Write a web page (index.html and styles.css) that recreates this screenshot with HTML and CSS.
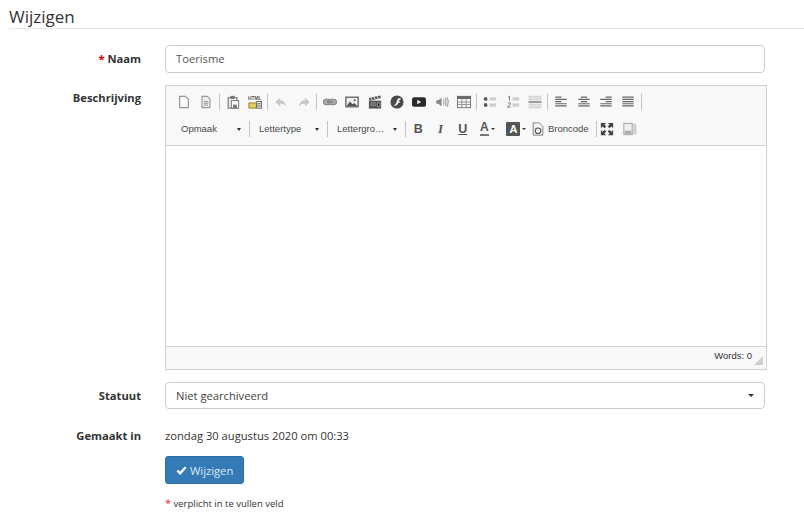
FILE: index.html
```html
<!DOCTYPE html>
<html>
<head>
  <title>Wijzigen</title>
  <link rel="stylesheet" href="styles.css">
</head>
<body>
  <svg class="defs" width="0" height="0">
    <symbol id="i-new" viewBox="0 0 16 16"><path d="M3 1.500h6.500l3.500 3.500v9.500h-10z" fill="#fbfbfb" stroke="#999" stroke-width="1.400"/></symbol>
    <symbol id="i-preview" viewBox="0 0 16 16"><path d="M3.500 1.500h6l3 3v10h-9z" fill="#eee" stroke="#999" stroke-width="1.300"/><path d="M5.500 7.500h5M5.500 9.500h5M5.500 11.500h5" stroke="#888"/></symbol>
    <symbol id="i-paste" viewBox="0 0 16 16"><path d="M2.500 3h10v12h-10z" fill="#eee" stroke="#888" stroke-width="1.500"/><rect x="5" y="1" width="5" height="3.500" fill="#777"/><rect x="6" y="6.500" width="8.500" height="8.500" fill="#fff" stroke="#666"/><rect x="8" y="11" width="4.500" height="4" fill="#777"/></symbol>
    <symbol id="i-undo" viewBox="0 0 16 16"><path d="M7 3l-5.500 5 5.500 5v-3c3 0 5 .8 6.500 3 0-4-2.500-7-6.500-7z" fill="#c8c8c8"/></symbol>
    <symbol id="i-redo" viewBox="0 0 16 16"><path d="M9 3l5.500 5-5.500 5v-3c-3 0-5 .8-6.500 3 0-4 2.500-7 6.500-7z" fill="#c8c8c8"/></symbol>
    <symbol id="i-link" viewBox="0 0 16 16"><rect x=".5" y="5" width="9" height="6" rx="3" fill="#aaa" stroke="#8c8c8c" stroke-width="1.300"/><rect x="6.500" y="5" width="9" height="6" rx="3" fill="#aaa" stroke="#8c8c8c" stroke-width="1.300"/><path d="M4.500 8h7" stroke="#777" stroke-width="1.500"/></symbol>
    <symbol id="i-image" viewBox="0 0 16 16"><rect x="1" y="2.500" width="14" height="11" fill="#f0f0f0" stroke="#555" stroke-width="1.400"/><path d="M2 12.500l3.500-5 3 3 2-1.500 3.500 3.500z" fill="#555"/><circle cx="11" cy="6" r="1.300" fill="#777"/></symbol>
    <symbol id="i-film" viewBox="0 0 16 16"><path d="M1 6.500h14v9h-14z" fill="#555"/><path d="M1 3.500l13-3 .8 3-13 3z" fill="#555"/><path d="M3.500 3l1 2.500M7 2.200l1 2.500M10.500 1.400l1 2.500" stroke="#ddd" stroke-width="1.200"/><path d="M3 9h6M3 11.500h6M11 9h2.500v4h-2.500z" stroke="#aaa"/></symbol>
    <symbol id="i-flash" viewBox="0 0 16 16"><circle cx="8" cy="8" r="7.500" fill="#4a4a4a"/><path d="M12 3.500c-3 .2-3.800 1.800-4.300 3.700s-1 3.800-3.700 5c3 .3 4.800-1 5.300-3.200l1.700-.2.300-1.800h-1.500c.3-1 .9-1.400 2.200-1.600z" fill="#f4f4f4"/></symbol>
    <symbol id="i-youtube" viewBox="0 0 16 16"><rect x="0" y="2.500" width="16" height="11" rx="2.500" fill="#2a2a2a"/><path d="M6 5.500l4.500 2.500-4.500 2.500z" fill="#f4f4f4"/></symbol>
    <symbol id="i-sound" viewBox="0 0 16 16"><path d="M1.500 6h2.500l3.500-3v10l-3.500-3h-2.500z" fill="#888"/><path d="M9.500 5c1 2 1 4 0 6M11.500 3.500c1.500 3 1.500 6 0 9M13.500 2.500c2 3.500 2 7.500 0 11" fill="none" stroke="#999" stroke-width="1.200"/></symbol>
    <symbol id="i-table" viewBox="0 0 16 16"><rect x=".5" y="1.500" width="15" height="13" fill="#fafafa" stroke="#666"/><rect x=".5" y="1.500" width="15" height="3" fill="#666"/><path d="M5.500 4.500v10M10.500 4.500v10M.5 8h15M.5 11h15" stroke="#888"/></symbol>
    <symbol id="i-bullet" viewBox="0 0 16 16"><rect x="1" y="2.500" width="4" height="4" rx="1.500" fill="#555"/><rect x="1" y="9.500" width="4" height="4" rx="1.500" fill="#555"/><path d="M7.500 3.500h7.500M7.500 5.500h7.500M7.500 10.500h7.500M7.500 12.500h7.500" stroke="#aaa"/></symbol>
    <symbol id="i-number" viewBox="0 0 16 16"><path d="M4 1v5.500M2.500 2.500l1.500-1.500M2 9h3v2l-3 2v1h3.500" fill="none" stroke="#777"/><path d="M7.500 3.500h7.500M7.500 5.500h7.500M7.500 10.500h7.500M7.500 12.500h7.500" stroke="#aaa"/></symbol>
    <symbol id="i-hr" viewBox="0 0 16 16"><path d="M.5 1.500h15M.5 3.500h15M.5 5.500h15M.5 10.500h15M.5 12.500h15M.5 14.500h15" stroke="#c4c4c4"/><path d="M.5 8h15" stroke="#666" stroke-width="1.400"/></symbol>
    <symbol id="i-left" viewBox="0 0 16 16"><path d="M1.500 2.500h7M1.500 5h13M1.500 7.500h7M1.500 10h13M1.500 12.500h13" stroke="#666" stroke-width="1.400"/></symbol>
    <symbol id="i-center" viewBox="0 0 16 16"><path d="M4.500 2.500h7M1.500 5h13M4.500 7.500h7M1.500 10h13M1.500 12.500h13" stroke="#666" stroke-width="1.400"/></symbol>
    <symbol id="i-right" viewBox="0 0 16 16"><path d="M7.500 2.500h7M1.500 5h13M7.500 7.500h7M1.500 10h13M1.500 12.500h13" stroke="#666" stroke-width="1.400"/></symbol>
    <symbol id="i-justify" viewBox="0 0 16 16"><path d="M1.500 2.500h13M1.500 5h13M1.500 7.500h13M1.500 10h13M1.500 12.500h13" stroke="#666" stroke-width="1.400"/></symbol>
    <symbol id="i-source" viewBox="0 0 16 16"><path d="M2.500 1h7l4 4v10h-11z" fill="#f4f4f4" stroke="#777"/><circle cx="8" cy="10" r="3.200" fill="none" stroke="#555" stroke-width="1.300"/></symbol>
    <symbol id="i-max" viewBox="0 0 16 16"><path d="M1 1h6l-2 2 2.200 2.200-2 2-2.200-2.200-2 2zM15 1v6l-2-2-2.200 2.200-2-2 2.200-2.200-2-2zM1 15v-6l2 2 2.200-2.200 2 2-2.200 2.200 2 2zM15 15h-6l2-2-2.200-2.200 2-2 2.200 2.200 2-2z" fill="#444"/></symbol>
    <symbol id="i-blocks" viewBox="0 0 16 16"><rect x="1" y="1.500" width="9.500" height="13" fill="#f0f0f0" stroke="#999"/><rect x="2" y="10" width="7.500" height="3.500" fill="#aaa"/><path d="M12.500 2v12M14.500 2v12" stroke="#aaa"/></symbol>
  </svg>

  <div class="page">
    <h1 class="page-title">Wijzigen</h1>

    <form class="edit-form">
      <label class="form-label"><span class="req">*</span> Naam</label>
      <input class="form-input form-text" type="text" value="Toerisme">

      <label class="form-label form-label-editor">Beschrijving</label>
      <div class="editor">
        <div class="toolbar">
          <div class="tb-row">
            <span class="tb-btn"><svg><use href="#i-new"/></svg></span>
            <span class="tb-btn"><svg><use href="#i-preview"/></svg></span>
            <span class="tb-sep"></span>
            <span class="tb-btn"><svg><use href="#i-paste"/></svg></span>
            <span class="tb-btn"><svg viewBox="0 0 16 16"><text x="0" y="6" class="svg-tiny">HTML</text><path d="M1 9h8.500v6h-8.500z" fill="#e6cf62" stroke="#8a7a2a"/><rect x="10" y="7.500" width="5.500" height="7.500" fill="#eee" stroke="#555"/><path d="M11 10h3.500M11 12.500h3.500" stroke="#555"/></svg></span>
            <span class="tb-sep"></span>
            <span class="tb-btn"><svg><use href="#i-undo"/></svg></span>
            <span class="tb-btn"><svg><use href="#i-redo"/></svg></span>
            <span class="tb-sep"></span>
            <span class="tb-btn"><svg><use href="#i-link"/></svg></span>
            <span class="tb-btn"><svg><use href="#i-image"/></svg></span>
            <span class="tb-btn"><svg><use href="#i-film"/></svg></span>
            <span class="tb-btn"><svg><use href="#i-flash"/></svg></span>
            <span class="tb-btn"><svg><use href="#i-youtube"/></svg></span>
            <span class="tb-btn"><svg><use href="#i-sound"/></svg></span>
            <span class="tb-btn"><svg><use href="#i-table"/></svg></span>
            <span class="tb-sep"></span>
            <span class="tb-btn"><svg><use href="#i-bullet"/></svg></span>
            <span class="tb-btn"><svg><use href="#i-number"/></svg></span>
            <span class="tb-btn"><svg><use href="#i-hr"/></svg></span>
            <span class="tb-sep"></span>
            <span class="tb-btn"><svg><use href="#i-left"/></svg></span>
            <span class="tb-btn"><svg><use href="#i-center"/></svg></span>
            <span class="tb-btn"><svg><use href="#i-right"/></svg></span>
            <span class="tb-btn"><svg><use href="#i-justify"/></svg></span>
            <span class="tb-sep"></span>
          </div>
          <div class="tb-row tb-row-format">
            <span class="tb-combo">Opmaak<i class="caret"></i></span>
            <span class="tb-sep"></span>
            <span class="tb-combo">Lettertype<i class="caret"></i></span>
            <span class="tb-sep"></span>
            <span class="tb-combo">Lettergro…<i class="caret"></i></span>
            <span class="tb-sep tb-sep-tight"></span>
            <span class="tb-btn tb-letter tb-bold">B</span>
            <span class="tb-btn tb-letter tb-italic">I</span>
            <span class="tb-btn tb-letter tb-under">U</span>
            <span class="tb-color"><span class="tb-a">A</span><i class="caret caret-small"></i></span>
            <span class="tb-color"><span class="tb-a-bg">A</span><i class="caret caret-small"></i></span>
            <span class="tb-source"><svg><use href="#i-source"/></svg>Broncode</span>
            <span class="tb-sep tb-sep-flush"></span>
            <span class="tb-btn tb-btn-max"><svg><use href="#i-max"/></svg></span>
            <span class="tb-btn tb-btn-blocks"><svg><use href="#i-blocks"/></svg></span>
          </div>
        </div>
        <div class="editor-body"></div>
        <div class="editor-foot">
          <span class="word-count">Words: 0</span>
          <span class="resizer"></span>
        </div>
      </div>

      <label class="form-label">Statuut</label>
      <div class="form-input form-select">Niet gearchiveerd<i class="caret caret-dark"></i></div>

      <label class="form-label form-label-static">Gemaakt in</label>
      <div class="form-static">zondag 30 augustus 2020 om 00:33</div>

      <div class="form-actions">
        <button class="btn-save" type="button">
          <svg class="check" viewBox="0 0 12 12"><path d="M1.500 6l3 3 6-6.500" fill="none" stroke="#fff" stroke-width="2.600"/></svg>
          Wijzigen
        </button>
        <p class="req-note"><span class="req">*</span> verplicht in te vullen veld</p>
      </div>
    </form>
  </div>
</body>
</html>
```

FILE: styles.css
```css
body {
  margin: 0;
  font-family: "Open Sans", sans-serif;
  font-size: 11.200px;
  color: #333;
  background: #fff;
  overflow: hidden;
}

.defs {
  position: absolute;
}

.svg-tiny {
  font-family: "Liberation Sans", sans-serif;
  font-size: 5.500px;
  font-weight: bold;
  fill: #555;
}

.page {
  padding-left: 9px;
}

.page-title {
  margin: 0;
  height: 28px;
  font-size: 17px;
  font-weight: 400;
  line-height: 33px;
  border-bottom: 1px solid #e5e5e5;
}

.edit-form {
  display: grid;
  grid-template-columns: 132px 600px;
  column-gap: 24px;
  row-gap: 12px;
  margin-top: 16px;
}

.form-label {
  padding-top: 5px;
  text-align: right;
  font-weight: 700;
  line-height: 17px;
}

.form-label-editor {
  padding-top: 4px;
}

.req {
  color: #d00;
}

.form-input {
  box-sizing: border-box;
  width: 600px;
  height: 28px;
  padding: 0 10px;
  font-family: inherit;
  font-size: 11.200px;
  color: #555;
  background: #fff;
  border: 1px solid #ccc;
  border-radius: 4px;
}

.form-text {
  padding-bottom: 2px;
}

.form-select {
  position: relative;
  height: 27px;
  line-height: 25px;
  color: #444;
}

.form-label-static {
  padding-top: 6px;
}

.form-static {
  padding-top: 6px;
  line-height: 17px;
}

.editor {
  box-sizing: border-box;
  width: 602px;
  height: 285px;
  display: flex;
  flex-direction: column;
  border: 1px solid #d1d1d1;
}

.toolbar {
  height: 60px;
  padding-left: 7px;
  font-family: "Liberation Sans", sans-serif;
  font-size: 9.500px;
  color: #484848;
  background: #f8f8f8;
  border-bottom: 1px solid #d1d1d1;
  box-sizing: border-box;
}

.tb-row {
  display: flex;
  align-items: center;
  height: 27px;
}

.tb-row:first-child {
  margin-top: 2px;
}

.tb-row-format {
  margin-left: 1px;
}

.tb-btn {
  display: flex;
  align-items: center;
  justify-content: center;
  width: 22.330px;
  height: 20px;
}

.tb-btn svg,
.tb-source svg {
  width: 14px;
  height: 14px;
}

.tb-sep {
  width: 1px;
  height: 16px;
  margin: 0 2px 0 1px;
  background: #c4c4c4;
}

.tb-sep-tight {
  margin-right: 1px;
}

.tb-sep-flush {
  margin: 0 0 0 1px;
}

.tb-combo {
  position: relative;
  box-sizing: border-box;
  width: 74px;
  padding-left: 7px;
}

.caret {
  position: absolute;
  right: 7px;
  top: 5px;
  border-left: 2.500px solid transparent;
  border-right: 2.500px solid transparent;
  border-top: 3px solid #333;
}

.tb-letter {
  font-family: "Liberation Sans", sans-serif;
  font-size: 12.500px;
  font-weight: 700;
  color: #555;
}

.tb-italic {
  font-style: italic;
  font-family: "Liberation Serif", serif;
  font-size: 13px;
}

.tb-under {
  text-decoration: underline;
}

.tb-color {
  position: relative;
  display: flex;
  align-items: center;
  justify-content: flex-start;
  box-sizing: border-box;
  width: 26.500px;
  padding-left: 6px;
}

.caret-small {
  position: static;
  margin-left: 2px;
  border-left-width: 2px;
  border-right-width: 2px;
  border-top-width: 2px;
}

.tb-a {
  font-size: 12px;
  font-weight: 700;
  line-height: 13px;
  color: #555;
  border-bottom: 2px solid #777;
}

.tb-a-bg {
  width: 14px;
  height: 14px;
  font-size: 11px;
  font-weight: 700;
  line-height: 14px;
  text-align: center;
  color: #fff;
  background: #555;
  border-radius: 1px;
}

.tb-source {
  display: flex;
  align-items: center;
  gap: 3px;
  width: 68px;
  padding-left: 4px;
  box-sizing: border-box;
}

.tb-btn-max {
  width: 20px;
}

.tb-btn-blocks {
  width: 26px;
}

.editor-body {
  flex: 1;
  background: #fff;
}

.editor-foot {
  position: relative;
  height: 23px;
  padding-right: 14px;
  text-align: right;
  font-family: "Liberation Sans", sans-serif;
  font-size: 9.500px;
  line-height: 18px;
  color: #333;
  background: #f8f8f8;
  border-top: 1px solid #d1d1d1;
  box-sizing: border-box;
}

.resizer {
  position: absolute;
  right: 3px;
  bottom: 4px;
  width: 0;
  height: 0;
  border-left: 9px solid transparent;
  border-bottom: 9px solid #cfcfcf;
}

.caret-dark {
  right: 10px;
  top: 11px;
  border-left-width: 3.500px;
  border-right-width: 3.500px;
  border-top-width: 3.500px;
}

.form-actions {
  grid-column: 2;
  margin-top: 0;
}

.btn-save {
  display: flex;
  align-items: center;
  gap: 3px;
  box-sizing: border-box;
  width: 79px;
  height: 28px;
  padding: 0 0 0 10px;
  font-family: inherit;
  font-size: 11.200px;
  color: #dfe9f3;
  background: #337ab7;
  border: 1px solid #2e6da4;
  border-radius: 3px;
}

.check {
  width: 11px;
  height: 11px;
}

.req-note {
  margin: 12px 0 0;
  font-size: 9.500px;
  line-height: 14px;
}

.req-note .req {
  font-size: 11px;
  color: #e22;
}
```
